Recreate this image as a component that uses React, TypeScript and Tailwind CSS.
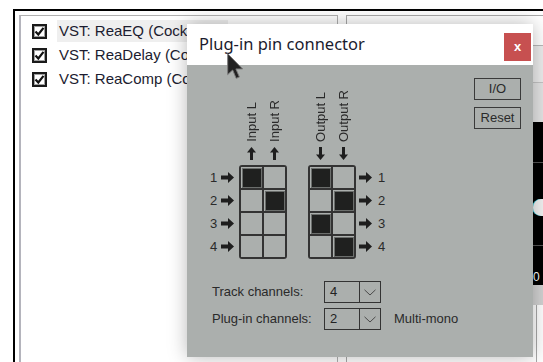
import React from "react";

const RightArrow = () => (
  <svg width="13" height="11" viewBox="0 0 13 11" className="block">
    <path d="M0 3.5 H7 V0 L13 5.5 L7 11 V7.5 H0 Z" fill="#1e1e1e" />
  </svg>
);

const UpArrow = ({ down = false }: { down?: boolean }) => (
  <svg width="9" height="13" viewBox="0 0 9 13" className={down ? "block rotate-180" : "block"}>
    <path d="M4.5 0 L9 5.5 H6 V13 H3 V5.5 H0 Z" fill="#1e1e1e" />
  </svg>
);

const Chevron = () => (
  <svg width="12" height="7" viewBox="0 0 12 7" className="block">
    <polyline points="0.5,0.8 6,6 11.5,0.8" fill="none" stroke="#4a4a4a" strokeWidth="1" />
  </svg>
);

function PinGrid({ cells }: { cells: number[][] }) {
  return (
    <div className="grid grid-cols-[21px_21px] gap-[2px] bg-[#333] border-2 border-[#333] rounded-[3px]">
      {cells.flat().map((c, i) => (
        <div key={i} className="w-[21px] h-[21px] bg-[#abafad] p-[1.5px]">
          {c ? <div className="w-full h-full bg-[#1f201f] shadow-[0_0_0_1px_#6b6e6c]" /> : null}
        </div>
      ))}
    </div>
  );
}

function Label({ text }: { text: string }) {
  return (
    <div className="flex justify-center items-end">
      <span className="[writing-mode:vertical-rl] rotate-180 text-[13px] leading-[14px] text-[#2a2a2a] whitespace-nowrap">
        {text}
      </span>
    </div>
  );
}

function PinGroup({ labels, cells, down }: { labels: string[]; cells: number[][]; down?: boolean }) {
  return (
    <div className="flex flex-col w-[48px]">
      <div className="grid grid-cols-2 h-[56px] items-end px-[1px]">
        {labels.map((l) => (
          <Label key={l} text={l} />
        ))}
      </div>
      <div className="grid grid-cols-2 h-[13px] mt-[5px] px-[1px]">
        <div className="flex justify-center"><UpArrow down={down} /></div>
        <div className="flex justify-center"><UpArrow down={down} /></div>
      </div>
      <div className="mt-[5px]">
        <PinGrid cells={cells} />
      </div>
    </div>
  );
}

function NumCol({ side }: { side: "left" | "right" }) {
  return (
    <div className="flex flex-col pt-[2px] gap-[2px] h-[94px]">
      {[1, 2, 3, 4].map((n) => (
        <div key={n} className="h-[21px] flex items-center text-[13px] text-[#2a2a2a]">
          {side === "left" ? (
            <>
              <span className="w-[11px]">{n}</span>
              <RightArrow />
            </>
          ) : (
            <>
              <RightArrow />
              <span className="ml-[6px]">{n}</span>
            </>
          )}
        </div>
      ))}
    </div>
  );
}

function Select({ value }: { value: string }) {
  return (
    <div className="w-[57px] h-[22px] border border-[#333] flex">
      <div className="w-[34px] pl-[5px] flex items-center text-[13px] text-[#222]">{value}</div>
      <div className="flex-1 border-l border-[#333] flex items-center justify-center">
        <Chevron />
      </div>
    </div>
  );
}

const ListRow = ({ text, hl }: { text: string; hl?: boolean }) => (
  <div className="h-[24px] flex items-center">
    <div className="ml-[11px] w-[15px] h-[15px] border-2 border-[#1a1a1a] bg-white shadow-[inset_0_0_0_1px_#a0a0a0] flex items-center justify-center">
      <svg width="11" height="11" viewBox="0 0 11 11" className="block">
        <path d="M1.5 5.5 L4.3 8.5 L9.5 1.8" fill="none" stroke="#111" strokeWidth="2.2" />
      </svg>
    </div>
    <div className={"ml-[10px] h-[22px] flex items-center pl-[2px] pr-[20px] whitespace-nowrap text-[15px] text-[#1c1c30] " + (hl ? "bg-[#efefef]" : "")}>
      {text}
    </div>
  </div>
);

export default function App() {
  return (
    <div className="relative w-[543px] h-[362px] overflow-hidden bg-white font-['Liberation_Sans',Arial,sans-serif]">
      {/* background window */}
      <div className="ml-[13px] mt-[9px] h-[353px] border-l-2 border-t-2 border-black pl-[4px] pt-[4px] flex">
        <div className="w-[319px] h-full border-l-2 border-t border-r border-l-[#b4b4bc] border-t-[#b0b0b0] border-r-[#b0b0b0] pt-[3px] overflow-hidden">
          <ListRow text="VST: ReaEQ (Cockos)" hl />
          <ListRow text="VST: ReaDelay (Cockos)" />
          <ListRow text="VST: ReaComp (Cockos)" />
        </div>
        <div className="ml-[8px] flex-1 h-full border-l border-t border-[#a8a8a8] flex justify-end">
          <div className="w-[10px] h-full flex flex-col">
            <div className="h-[29px] bg-white" />
            <div className="h-[37px] border-t border-[#b8b8b8] bg-[#ececec]" />
            <div className="h-[40px] border-t border-[#c4c4c4] bg-[#e4e4e4]" />
            <div className="relative h-[163px] bg-black flex flex-col">
              <div className="h-[40px]" />
              <div className="h-[83px] border-t border-[#555]" />
              <div className="flex-1 border-t border-[#555] flex items-end pb-[2px]">
                <span className="text-[12px] leading-[12px] text-white">0</span>
              </div>
              <div className="absolute left-[0px] top-[77px] w-[17px] h-[17px] rounded-full bg-[#f2f2f2] shadow-[-1px_0_0_#3cc8d8]" />
            </div>
            <div className="h-[20px] bg-[#d2d2d2]" />
            <div className="flex-1 border-l border-[#a8a8a8] ml-[3px] bg-white" />
          </div>
        </div>
      </div>

      {/* dialog */}
      <div className="absolute left-[187px] top-[24px] w-[346px] h-[333px] flex flex-col shadow-[0_0_18px_rgba(0,0,0,0.28)]">
        <div className="h-[41px] bg-white flex items-start justify-between pl-[12px] pr-[2px]">
          <span className="mt-[9px] font-['Noto_Sans',sans-serif] text-[16.5px] leading-[22px] text-[#1b1b2e]">
            Plug-in pin connector
          </span>
          <div className="mt-[9px] w-[27px] h-[28px] bg-[#c75050] flex items-center justify-center text-white font-bold text-[13px] leading-none pb-[2px]">
            x
          </div>
        </div>
        <div className="flex-1 bg-[#abafad] flex justify-between">
          <div className="pl-[23px] pt-[21px] flex flex-col">
            <div className="flex items-end">
              <NumCol side="left" />
              <div className="ml-[5px]">
                <PinGroup labels={["Input L", "Input R"]} cells={[[1, 0], [0, 1], [0, 0], [0, 0]]} />
              </div>
              <div className="ml-[21px]">
                <PinGroup labels={["Output L", "Output R"]} cells={[[1, 0], [0, 1], [1, 0], [0, 1]]} down />
              </div>
              <div className="ml-[3px]">
                <NumCol side="right" />
              </div>
            </div>
            <div className="mt-[22px] pl-[2px] flex flex-col gap-[5px] text-[13px] text-[#2a2a2a]">
              <div className="h-[22px] flex items-center">
                <span className="w-[112px]">Track channels:</span>
                <Select value="4" />
              </div>
              <div className="h-[22px] flex items-center">
                <span className="w-[112px]">Plug-in channels:</span>
                <Select value="2" />
                <span className="ml-[13px]">Multi-mono</span>
              </div>
            </div>
          </div>
          <div className="pt-[13px] pr-[12px] flex flex-col gap-[7px]">
            <div className="w-[47px] h-[22px] border border-[#3a3a3a] flex items-center justify-center text-[13px] text-[#2a2a2a]">I/O</div>
            <div className="w-[47px] h-[22px] border border-[#3a3a3a] flex items-center justify-center text-[13px] text-[#2a2a2a]">Reset</div>
          </div>
        </div>
      </div>

      {/* mouse cursor */}
      <svg width="17" height="27" viewBox="0 0 12.6 20" className="absolute left-[227px] top-[53px] blur-[0.4px]">
        <path d="M0.5 0.5 L0.5 16 L4.2 12.6 L6.8 18.8 L9.2 17.8 L6.6 11.8 L11.6 11.8 Z" fill="#222" stroke="#7a7a7a" strokeWidth="0.7" strokeLinejoin="round" />
      </svg>
    </div>
  );
}
